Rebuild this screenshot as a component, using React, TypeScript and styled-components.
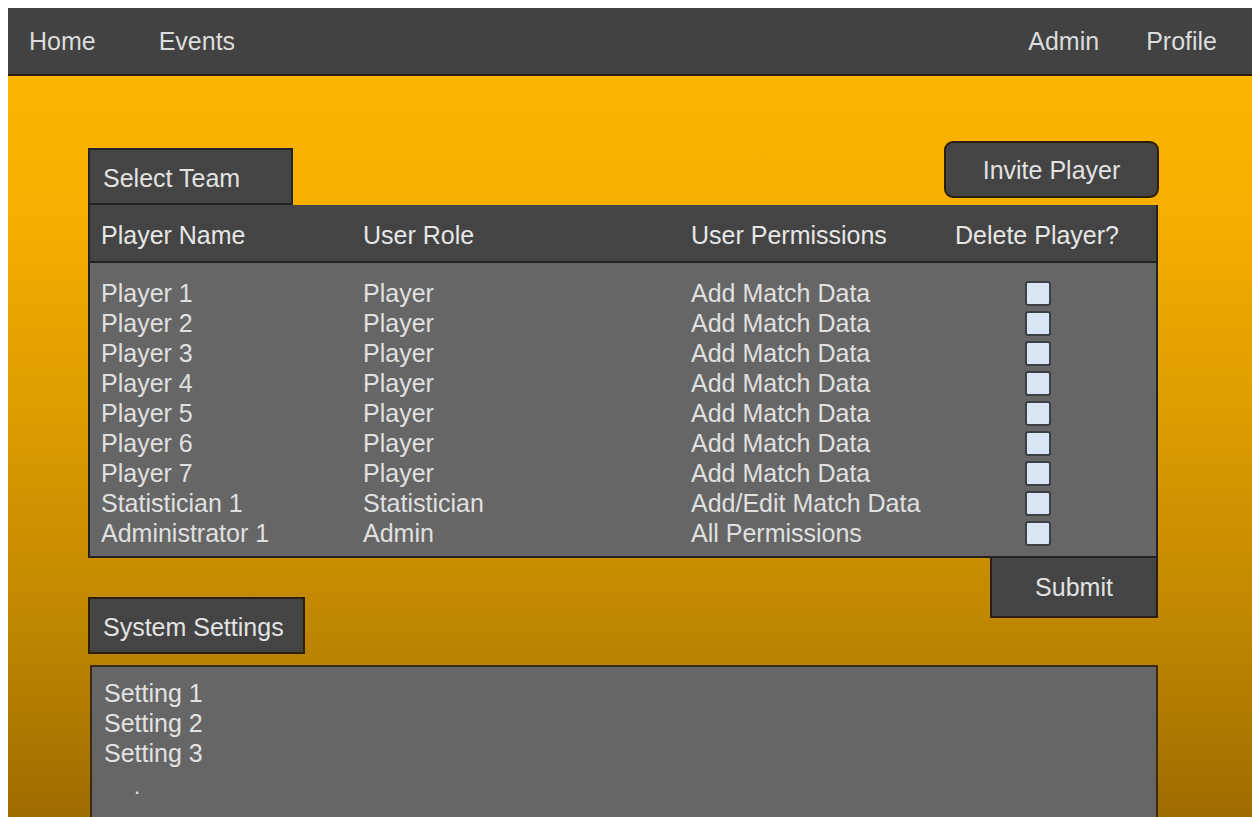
import React from "react";
import styled, { createGlobalStyle } from "styled-components";

const GlobalStyle = createGlobalStyle`
  html, body {
    margin: 0;
    background: #ffffff;
    overflow: hidden;
  }
  body {
    margin: 8px 0 0 8px;
    font-family: "Liberation Sans", Arial, sans-serif;
  }
`;

const Page = styled.div`
  width: 1244px;
  height: 809px;
  display: flex;
  flex-direction: column;
  overflow: hidden;
`;

const NavBar = styled.nav`
  height: 66px;
  flex: none;
  display: flex;
  align-items: center;
  justify-content: space-between;
  padding: 0 35px 0 21px;
  background: #424242;
  border-bottom: 2px solid #2a1d04;
`;

const NavGroup = styled.div<{ $gap: number }>`
  display: flex;
  align-items: center;
  gap: ${(p) => p.$gap}px;
`;

const NavLink = styled.a`
  color: #dcdcdc;
  font-size: 25px;
  text-decoration: none;
  cursor: pointer;
`;

const Main = styled.main`
  flex: 1;
  padding: 65px 0 0 80px;
  background: linear-gradient(
    180deg,
    #fcb500 0%,
    #f6ae00 18%,
    #dc9c00 45%,
    #bf8600 72%,
    #9c6900 100%
  );
`;

const Content = styled.div`
  width: 1070px;
  display: flex;
  flex-direction: column;
`;

const TopRow = styled.div`
  display: flex;
  justify-content: space-between;
  align-items: flex-end;
`;

const Tab = styled.div<{ $width: number }>`
  box-sizing: border-box;
  width: ${(p) => p.$width}px;
  height: 57px;
  display: flex;
  align-items: center;
  padding: 4px 0 0 13px;
  background: #444444;
  border: 2px solid #222222;
  color: #e2e2e2;
  font-size: 25px;
`;

const InviteButton = styled.button`
  box-sizing: border-box;
  width: 215px;
  height: 57px;
  margin: 0 -1px 7px 0;
  background: #444444;
  border: 2px solid #2b1f06;
  border-radius: 9px;
  color: #e2e2e2;
  font-family: inherit;
  font-size: 25px;
  cursor: pointer;
  padding: 2px 0 0;
`;

const Table = styled.div`
  display: flex;
  flex-direction: column;
  border: 2px solid #222222;
  border-top: none;
`;

const Row = styled.div`
  display: grid;
  grid-template-columns: 262px 328px 264px 165px;
  align-items: center;
  padding-left: 11px;
  color: #e0e0e0;
  font-size: 25px;
  line-height: 30px;
`;

const HeaderRow = styled(Row)`
  box-sizing: border-box;
  height: 58px;
  padding-top: 4px;
  background: #444444;
  border-bottom: 2px solid #222222;
  color: #e6e6e6;
`;

const Body = styled.div`
  background: #666666;
  padding: 15px 0 8px;
`;

const CheckCell = styled.div`
  display: flex;
  justify-content: center;
  padding-left: 1px;
`;

const CheckBox = styled.span`
  box-sizing: border-box;
  width: 26px;
  height: 25px;
  background: #d9e5f4;
  border: 2px solid #3c3f44;
  border-radius: 3px;
`;

const LowerRow = styled.div`
  display: flex;
  justify-content: space-between;
  align-items: flex-start;
`;

const SettingsTab = styled(Tab)`
  margin-top: 39px;
  height: 57px;
  border-color: #2a1f07;
`;

const SubmitButton = styled.button`
  box-sizing: border-box;
  width: 168px;
  height: 60px;
  background: #444444;
  border: 2px solid #2b1f06;
  border-top: none;
  color: #e2e2e2;
  font-family: inherit;
  font-size: 25px;
  padding: 0;
  cursor: pointer;
`;

const SettingsPanel = styled.div`
  margin: 11px 0 0 2px;
  height: 160px;
  background: #666666;
  border: 2px solid #3a2a06;
  padding: 11px 0 0 12px;
  color: #e2e2e2;
  font-size: 25px;
  line-height: 30px;
`;

const Ellipsis = styled.div`
  padding: 4px 0 0 30px;
  font-size: 22px;
  line-height: 30px;
`;

const players = [
  { name: "Player 1", role: "Player", perm: "Add Match Data" },
  { name: "Player 2", role: "Player", perm: "Add Match Data" },
  { name: "Player 3", role: "Player", perm: "Add Match Data" },
  { name: "Player 4", role: "Player", perm: "Add Match Data" },
  { name: "Player 5", role: "Player", perm: "Add Match Data" },
  { name: "Player 6", role: "Player", perm: "Add Match Data" },
  { name: "Player 7", role: "Player", perm: "Add Match Data" },
  { name: "Statistician 1", role: "Statistician", perm: "Add/Edit Match Data" },
  { name: "Administrator 1", role: "Admin", perm: "All Permissions" },
];

export default function App() {
  return (
    <Page>
      <GlobalStyle />
      <NavBar>
        <NavGroup $gap={63}>
          <NavLink>Home</NavLink>
          <NavLink>Events</NavLink>
        </NavGroup>
        <NavGroup $gap={47}>
          <NavLink>Admin</NavLink>
          <NavLink>Profile</NavLink>
        </NavGroup>
      </NavBar>
      <Main>
        <Content>
          <TopRow>
            <Tab $width={205}>Select Team</Tab>
            <InviteButton>Invite Player</InviteButton>
          </TopRow>
          <Table>
            <HeaderRow>
              <div>Player Name</div>
              <div>User Role</div>
              <div>User Permissions</div>
              <div>Delete Player?</div>
            </HeaderRow>
            <Body>
              {players.map((p) => (
                <Row key={p.name}>
                  <div>{p.name}</div>
                  <div>{p.role}</div>
                  <div>{p.perm}</div>
                  <CheckCell>
                    <CheckBox />
                  </CheckCell>
                </Row>
              ))}
            </Body>
          </Table>
          <LowerRow>
            <SettingsTab $width={217}>System Settings</SettingsTab>
            <SubmitButton>Submit</SubmitButton>
          </LowerRow>
          <SettingsPanel>
            <div>Setting 1</div>
            <div>Setting 2</div>
            <div>Setting 3</div>
            <Ellipsis>.</Ellipsis>
          </SettingsPanel>
        </Content>
      </Main>
    </Page>
  );
}
